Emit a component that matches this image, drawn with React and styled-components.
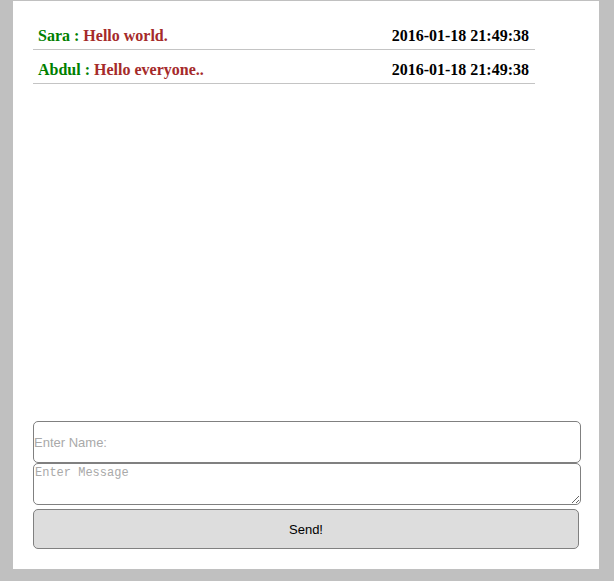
import React from 'react';
import styled, { createGlobalStyle } from 'styled-components';

const GlobalStyle = createGlobalStyle`
  html, body {
    margin: 0;
    padding: 0;
    background-color: #c0c0c0;
  }
`

const Panel = styled.div`
  box-sizing: border-box;
  width: 586px;
  height: 568px;
  margin: 1px 0 12px 13px;
  padding: 15px 18px 20px 20px;
  background-color: #fff;
  display: flex;
  flex-direction: column;
`

const MessageList = styled.ul`
  list-style: none;
  margin: 0;
  padding: 0;
  width: 502px;
  flex: 1;
`

const Message = styled.li`
  display: flex;
  justify-content: space-between;
  padding: 10px 6px 3px 5px;
  line-height: 20px;
  border-bottom: 1px solid #c4c4c4;
  font-family: "Liberation Serif", "Times New Roman", serif;
  font-weight: bold;
  font-size: 16px;
`

const Author = styled.span`
  color: green;
`

const Text = styled.span`
  color: brown;
`

const Time = styled.span`
  color: #000;
`

const Form = styled.form`
  display: flex;
  flex-direction: column;
  margin: 0;
`

const NameInput = styled.input`
  box-sizing: border-box;
  width: 548px;
  height: 42px;
  margin: 0;
  padding: 0;
  border: 1px solid #808080;
  border-radius: 5px;
  font-family: "Liberation Sans", Arial, sans-serif;
  font-size: 13px;
  outline: none;

  &::placeholder {
    color: #a9a9a9;
  }
`

const MessageInput = styled.textarea`
  box-sizing: border-box;
  width: 548px;
  height: 42px;
  margin: 0;
  padding: 2px 0 0 1px;
  border: 1px solid #808080;
  border-radius: 5px;
  font-family: "Liberation Mono", "Courier New", monospace;
  font-size: 12px;
  outline: none;
  display: block;

  &::placeholder {
    color: #a9a9a9;
  }
`

const SendButton = styled.button`
  box-sizing: border-box;
  width: 546px;
  height: 40px;
  margin-top: 4px;
  background-color: #dddddd;
  border: 1px solid #808080;
  border-radius: 5px;
  font-family: "Liberation Sans", Arial, sans-serif;
  font-size: 13px;
  color: #000;
`

const messages = [
  { name: 'Sara', text: 'Hello world.', time: '2016-01-18 21:49:38' },
  { name: 'Abdul', text: 'Hello everyone..', time: '2016-01-18 21:49:38' },
]

const App = () => {
  return (
    <>
      <GlobalStyle />
      <Panel>
        <MessageList>
          {messages.map((m, i) => (
            <Message key={i}>
              <span>
                <Author>{m.name} : </Author>
                <Text>{m.text}</Text>
              </span>
              <Time>{m.time}</Time>
            </Message>
          ))}
        </MessageList>
        <Form onSubmit={e => e.preventDefault()}>
          <NameInput placeholder="Enter Name:" />
          <MessageInput placeholder="Enter Message" />
          <SendButton type="submit">Send!</SendButton>
        </Form>
      </Panel>
    </>
  )
}

export default App
